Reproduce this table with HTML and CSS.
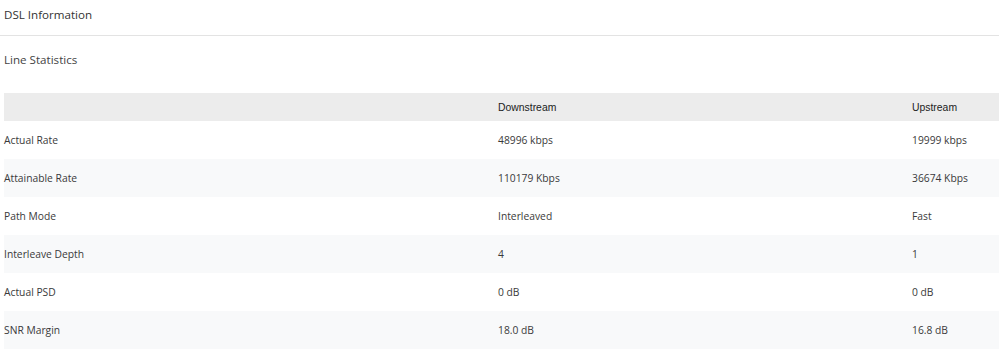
FILE: index.html
```html
<!DOCTYPE html>
<html>
<head>
<meta charset="utf-8">
<link rel="stylesheet" href="styles.css">
</head>
<body>
<div class="page">
  <div class="title">DSL Information</div>
  <div class="subtitle">Line Statistics</div>
  <table class="stats">
    <thead>
      <tr><th class="c1"></th><th class="c2">Downstream</th><th class="c3">Upstream</th></tr>
    </thead>
    <tbody>
      <tr><td>Actual Rate</td><td>48996 kbps</td><td>19999 kbps</td></tr>
      <tr><td>Attainable Rate</td><td>110179 Kbps</td><td>36674 Kbps</td></tr>
      <tr><td>Path Mode</td><td>Interleaved</td><td>Fast</td></tr>
      <tr><td>Interleave Depth</td><td>4</td><td>1</td></tr>
      <tr><td>Actual PSD</td><td>0 dB</td><td>0 dB</td></tr>
      <tr><td>SNR Margin</td><td>18.0 dB</td><td>16.8 dB</td></tr>
    </tbody>
  </table>
</div>
</body>
</html>
```
FILE: styles.css
```css
html, body {
  margin: 0;
  padding: 0;
  background: #fff;
}
.page {
  font-family: "Open Sans", sans-serif;
  color: #333;
  width: 1003px;
}
.title {
  font-size: 11.6px;
  height: 35px;
  line-height: 30px;
  padding-left: 4px;
  border-bottom: 1px solid #e3e3e3;
}
.subtitle {
  font-size: 11.6px;
  padding-left: 4px;
  line-height: 16px;
  padding-top: 16px;
  height: 41px;
  color: #444;
}
.stats {
  margin-left: 4px;
  width: 995px;
  border-collapse: collapse;
  font-size: 10.3px;
  color: #3a3a3a;
}
.stats th {
  background: #ececec;
  height: 28px;
  padding: 0;
  text-align: left;
  font-family: "Liberation Sans", Arial, sans-serif;
  font-weight: normal;
  font-size: 10.4px;
  color: #222;
}
.stats td {
  height: 38px;
  padding: 0;
}
.stats tbody tr:nth-child(even) td {
  background: #f8f9fa;
}
.c1 { width: 494px; }
.c2 { width: 414px; }
.c3 { width: 87px; }
```
